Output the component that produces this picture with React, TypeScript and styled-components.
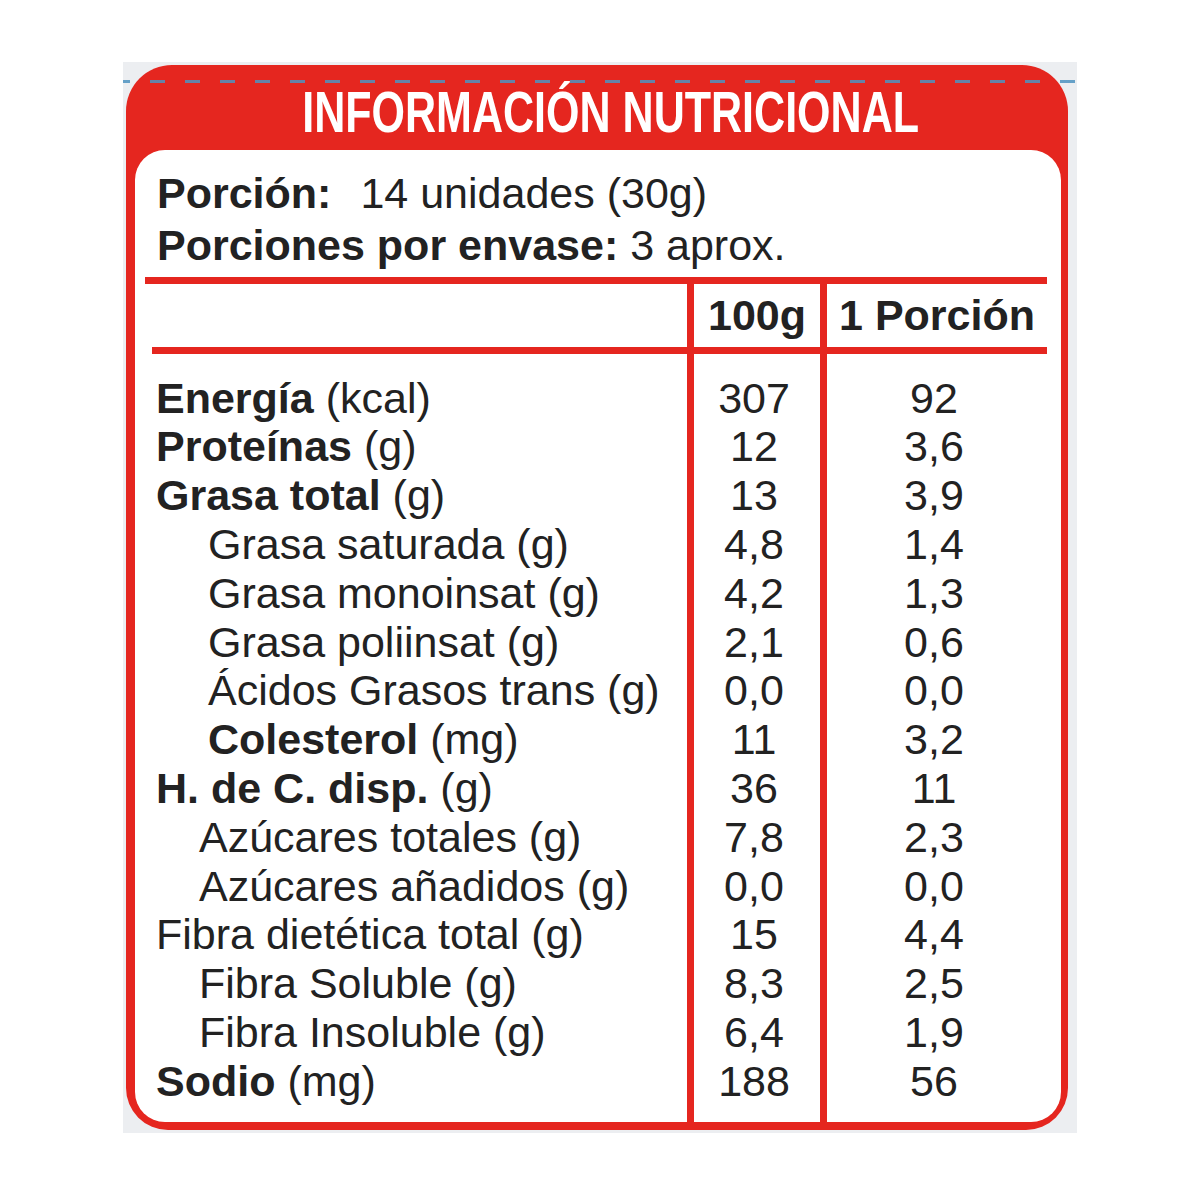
import React from 'react';
import styled, { createGlobalStyle } from 'styled-components';

const RED = '#e5261f';
const INK = '#222222';

const Global = createGlobalStyle`
  html, body { margin: 0; padding: 0; background: #ffffff; }
  body { font-family: "Liberation Sans", Arial, Helvetica, sans-serif; color: ${INK}; }
`;

const Page = styled.div`
  width: 1200px;
  height: 1200px;
  box-sizing: border-box;
  padding: 62px 0 0 123px;
`;

const Backdrop = styled.div`
  position: relative;
  width: 954px;
  box-sizing: border-box;
  padding: 3px 9px 3px 3px;
  background: #eceef1;
`;

const Dashes = styled.div`
  position: absolute;
  left: 0;
  right: 2px;
  top: 18px;
  height: 3px;
  background: repeating-linear-gradient(
    to right,
    #4e93c0 0 7px,
    transparent 7px 27px,
    #4e93c0 27px 35px
  );
  opacity: 0.85;
`;

const Label = styled.section`
  height: 1065px;
  box-sizing: border-box;
  background: ${RED};
  border-radius: 46px 46px 42px 42px;
  padding: 0 7px 8px 9px;
  display: flex;
  flex-direction: column;
`;

const Title = styled.h1`
  margin: 0;
  height: 85px;
  box-sizing: border-box;
  padding: 9px 0 0 25px;
  line-height: 76px;
  text-align: center;
  color: #fff;
  font-size: 58px;
  font-weight: 700;
`;

const TitleText = styled.span`
  display: inline-block;
  white-space: nowrap;
  transform: scaleX(0.742);
`;

const Panel = styled.div`
  flex: 1;
  background: #fff;
  border-radius: 30px;
  display: flex;
  flex-direction: column;
`;

const Serving = styled.div`
  padding: 17px 0 6px 22px;
  font-size: 43px;
  line-height: 52px;
`;

const ServingLine = styled.div`
  white-space: nowrap;
`;

const Strong = styled.b`
  font-weight: 700;
`;

const Gap = styled.span<{ $w: number }>`
  display: inline-block;
  width: ${(p) => p.$w}px;
`;

const Table = styled.div`
  flex: 1;
  margin: 0 14px 0 10px;
  display: flex;
  flex-direction: column;
`;

const Rule = styled.div<{ $inset: number }>`
  height: 7px;
  margin-left: ${(p) => p.$inset}px;
  background: ${RED};
`;

const COLS = '542px 133px 227px';

const HeaderRow = styled.div`
  display: grid;
  grid-template-columns: ${COLS};
  height: 63px;
`;

const HeaderCell = styled.div<{ $divider?: boolean }>`
  border-left: ${(p) => (p.$divider ? `7px solid ${RED}` : 'none')};
  font-size: 43px;
  font-weight: 700;
  line-height: 63px;
  text-align: center;
  white-space: nowrap;
`;

const Body = styled.div`
  flex: 1;
  display: grid;
  grid-template-columns: ${COLS};
`;

const Column = styled.div<{ $divider?: boolean; $center?: boolean }>`
  border-left: ${(p) => (p.$divider ? `7px solid ${RED}` : 'none')};
  padding: 19.6px ${(p) => (p.$divider ? 6 : 0)}px 0 ${(p) => (p.$divider ? 0 : 11)}px;
  text-align: ${(p) => (p.$center ? 'center' : 'left')};
`;

const Line = styled.div<{ $indent?: number }>`
  height: 48.8px;
  line-height: 48.8px;
  font-size: 43px;
  white-space: nowrap;
  padding-left: ${(p) => p.$indent ?? 0}px;
`;

type Row = { name: string; unit?: string; bold?: boolean; indent: number; a: string; b: string };

const rows: Row[] = [
  { name: 'Energía', unit: ' (kcal)', bold: true, indent: 0, a: '307', b: '92' },
  { name: 'Proteínas', unit: ' (g)', bold: true, indent: 0, a: '12', b: '3,6' },
  { name: 'Grasa total', unit: ' (g)', bold: true, indent: 0, a: '13', b: '3,9' },
  { name: 'Grasa saturada (g)', indent: 52, a: '4,8', b: '1,4' },
  { name: 'Grasa monoinsat (g)', indent: 52, a: '4,2', b: '1,3' },
  { name: 'Grasa poliinsat (g)', indent: 52, a: '2,1', b: '0,6' },
  { name: 'Ácidos Grasos trans (g)', indent: 52, a: '0,0', b: '0,0' },
  { name: 'Colesterol', unit: ' (mg)', bold: true, indent: 52, a: '11', b: '3,2' },
  { name: 'H. de C. disp.', unit: ' (g)', bold: true, indent: 0, a: '36', b: '11' },
  { name: 'Azúcares totales (g)', indent: 43, a: '7,8', b: '2,3' },
  { name: 'Azúcares añadidos (g)', indent: 43, a: '0,0', b: '0,0' },
  { name: 'Fibra dietética total (g)', indent: 0, a: '15', b: '4,4' },
  { name: 'Fibra Soluble (g)', indent: 43, a: '8,3', b: '2,5' },
  { name: 'Fibra Insoluble (g)', indent: 43, a: '6,4', b: '1,9' },
  { name: 'Sodio', unit: ' (mg)', bold: true, indent: 0, a: '188', b: '56' },
];

export default function App() {
  return (
    <Page>
      <Global />
      <Backdrop>
        <Label>
          <Title>
            <TitleText>INFORMACIÓN NUTRICIONAL</TitleText>
          </Title>
          <Panel>
            <Serving>
              <ServingLine>
                <Strong>Porción:</Strong>
                <Gap $w={29} />
                14 unidades (30g)
              </ServingLine>
              <ServingLine>
                <Strong>Porciones por envase:</Strong> 3 aprox.
              </ServingLine>
            </Serving>
            <Table>
              <Rule $inset={0} />
              <HeaderRow>
                <HeaderCell />
                <HeaderCell $divider>100g</HeaderCell>
                <HeaderCell $divider>1 Porción</HeaderCell>
              </HeaderRow>
              <Rule $inset={7} />
              <Body>
                <Column>
                  {rows.map((r) => (
                    <Line key={r.name} $indent={r.indent}>
                      {r.bold ? <Strong>{r.name}</Strong> : r.name}
                      {r.unit}
                    </Line>
                  ))}
                </Column>
                <Column $divider $center>
                  {rows.map((r) => (
                    <Line key={r.name}>{r.a}</Line>
                  ))}
                </Column>
                <Column $divider $center>
                  {rows.map((r) => (
                    <Line key={r.name}>{r.b}</Line>
                  ))}
                </Column>
              </Body>
            </Table>
          </Panel>
        </Label>
        <Dashes />
      </Backdrop>
    </Page>
  );
}
